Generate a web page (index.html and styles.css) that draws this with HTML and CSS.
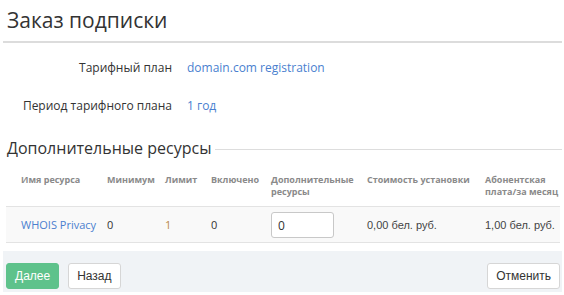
FILE: index.html
```html
<!DOCTYPE html>
<html lang="ru">
<head>
  <meta charset="UTF-8" />
  <title>Заказ подписки</title>
  <link rel="stylesheet" href="styles.css">
</head>
<body>

  <header class="page-header">
    <h1>Заказ подписки</h1>
  </header>

  <div class="plan-info">
    <div class="info-row">
      <span class="info-label">Тарифный план</span>
      <a class="info-value" href="#">domain.com registration</a>
    </div>
    <div class="info-row">
      <span class="info-label">Период тарифного плана</span>
      <a class="info-value" href="#">1 год</a>
    </div>
  </div>

  <h2 class="section-title"><span>Дополнительные ресурсы</span></h2>

  <table class="resources">
    <colgroup>
      <col style="width:97px">
      <col style="width:58px">
      <col style="width:46px">
      <col style="width:60px">
      <col style="width:96px">
      <col style="width:118px">
      <col>
    </colgroup>
    <thead>
      <tr>
        <th>Имя ресурса</th>
        <th>Минимум</th>
        <th>Лимит</th>
        <th>Включено</th>
        <th>Дополнительные<br>ресурсы</th>
        <th>Стоимость установки</th>
        <th>Абонентская<br>плата/за месяц</th>
      </tr>
    </thead>
    <tbody>
      <tr>
        <td><a href="#">WHOIS Privacy</a></td>
        <td>0</td>
        <td class="limit">1</td>
        <td>0</td>
        <td><input class="qty" type="text" value="0"></td>
        <td class="price">0,00 бел. руб.</td>
        <td class="price">1,00 бел. руб.</td>
      </tr>
    </tbody>
  </table>

  <div class="actions">
    <div class="actions-left">
      <button class="btn btn-primary" type="button">Далее</button>
      <button class="btn" type="button">Назад</button>
    </div>
    <button class="btn" type="button">Отменить</button>
  </div>

</body>
</html>
```

FILE: styles.css
```css
body {
  margin: 0;
  padding: 0 2px 0 3px;
  font-family: 'Open Sans', sans-serif;
  color: #333;
  background: #fff;
}

a {
  color: #4a7fcf;
  text-decoration: none;
}

.page-header {
  border-bottom: 2px solid #dcdcdc;
  padding: 6px 4px 7px;
}

.page-header h1 {
  margin: 0;
  font-size: 21px;
  font-weight: 400;
  line-height: 28px;
  color: #333;
}

.plan-info {
  padding-top: 16px;
  display: flex;
  flex-direction: column;
  gap: 20px;
}

.info-row {
  display: flex;
  align-items: center;
  gap: 15px;
  font-size: 12px;
  line-height: 18px;
}

.info-label {
  width: 169px;
  text-align: right;
}

.section-title {
  display: flex;
  align-items: center;
  margin: 21px 0 0;
  padding-left: 4px;
  font-size: 16px;
  font-weight: 400;
  line-height: 24px;
  color: #333;
}

.section-title::after {
  content: "";
  flex: 1;
  border-top: 1px solid #ddd;
  margin-left: 4px;
  margin-top: 2px;
}

.resources {
  width: 554px;
  margin: 12px 0 0 3px;
  border-collapse: collapse;
  table-layout: fixed;
}

.resources th {
  text-align: left;
  vertical-align: top;
  white-space: nowrap;
  font-size: 9px;
  font-weight: 700;
  color: #8a8a8a;
  line-height: 12px;
  padding: 2px 4px 8px;
  border-bottom: 1px solid #e3e3e3;
}

.resources td {
  font-size: 11px;
  line-height: 16px;
  padding: 5px 4px 4px;
  background: #f9f9f9;
  border-bottom: 1px solid #e3e3e3;
  height: 25px;
}

.resources th:first-child,
.resources td:first-child {
  padding-left: 15px;
}

.resources .limit {
  color: #b8884a;
}

.resources .price {
  font-family: 'Liberation Sans', Arial, sans-serif;
  color: #444;
}

.qty {
  box-sizing: border-box;
  width: 63px;
  height: 26px;
  border: 1px solid #c8c8c8;
  border-radius: 3px;
  padding: 0 6px;
  font-family: 'Open Sans', sans-serif;
  font-size: 12px;
  color: #333;
  background: #fff;
}

.actions {
  margin-top: 8px;
  background: #f0f3f6;
  display: flex;
  justify-content: space-between;
  align-items: center;
  padding: 12px 2px 3px 3px;
}

.actions-left {
  display: flex;
  gap: 9px;
}

.btn {
  font-family: 'Liberation Sans', Arial, sans-serif;
  font-size: 12px;
  height: 26px;
  padding: 0 8px;
  background: #fff;
  color: #333;
  border: 1px solid #d6d6d6;
  border-radius: 3px;
  cursor: pointer;
}

.btn-primary {
  background: #5ec28b;
  border-color: #5ec28b;
  color: #fff;
}
```
